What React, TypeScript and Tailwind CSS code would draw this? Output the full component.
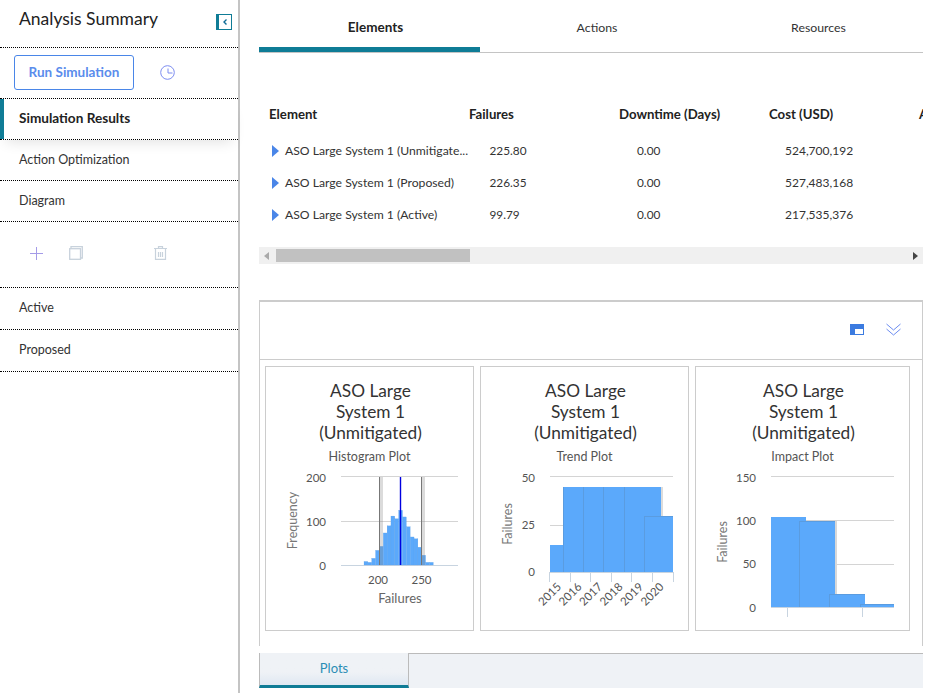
import React from "react";

const F = { fontFamily: '"Lato","Noto Sans",sans-serif' };

function Row({ children, h, extra = "" }: { children?: React.ReactNode; h: string; extra?: string }) {
  return <div className={`${h} ${extra} border-b border-dotted border-black flex items-center`}>{children}</div>;
}

function Card({ sub, wide, children }: { sub: string; wide?: boolean; children: React.ReactNode }) {
  return (
    <div className={`${wide ? "w-[215px]" : "w-[209px]"} h-[265px] border border-[#ccc] bg-white flex flex-col items-center pt-[13px] shrink-0`}>
      <div className="text-[17.3px] leading-[21px] text-[#333] text-center w-[130px] ml-[2px]">ASO Large System 1 (Unmitigated)</div>
      <div className="text-[12.5px] leading-[16px] mt-[6px] text-[#555]">{sub}</div>
      <div className="w-full h-[165px]">{children}</div>
    </div>
  );
}

function Num({ x, y, t, anchor = "end" }: { x: number; y: number; t: string; anchor?: "end" | "middle" }) {
  return <text x={x} y={y + 4} textAnchor={anchor} fontSize="11.5" fill="#555">{t}</text>;
}

function VLabel({ x, y, t }: { x: number; y: number; t: string }) {
  return <text transform={`translate(${x + 4} ${y}) rotate(-90)`} textAnchor="middle" fontSize="12.5" fill="#777">{t}</text>;
}

const hist = [8, 6, 15, 33, 42, 72, 88, 110, 104, 123, 108, 86, 63, 59, 40, 22, 6, 6];

function Histogram() {
  return (
    <svg width="207" height="165" viewBox="266 465 207 165" className="block">
      <g stroke="#d4d4d4">
        <line x1="341" x2="458" y1="476.5" y2="476.5" />
        <line x1="341" x2="458" y1="521.5" y2="521.5" />
      </g>
      <line x1="341" x2="458" y1="565.5" y2="565.5" stroke="#c8d4e0" />
      {hist.map((f, i) => {
        const x = 364 + i * 3.85;
        const hh = (f / 200) * 89;
        return <rect key={i} x={x} y={565 - hh} width="3.85" height={hh} fill="#5ba9fb" stroke="#5a9ce0" strokeWidth="0.2" />;
      })}
      <rect x="380" y="477" width="3" height="88" fill="#888" opacity="0.3" />
      <rect x="422" y="477" width="3" height="88" fill="#888" opacity="0.3" />
      <line x1="379.5" x2="379.5" y1="477" y2="565" stroke="#777" />
      <line x1="421.5" x2="421.5" y1="477" y2="565" stroke="#777" />
      <line x1="400.5" x2="400.5" y1="477" y2="565" stroke="#0000e0" strokeWidth="1.4" />
      <Num x={326} y={478} t="200" />
      <Num x={326} y={522} t="100" />
      <Num x={326} y={566} t="0" />
      <Num x={378} y={580} t="200" anchor="middle" />
      <Num x={421.5} y={580} t="250" anchor="middle" />
      <text x="400" y="603" textAnchor="middle" fontSize="13" fill="#666">Failures</text>
      <VLabel x={293} y={520.5} t="Frequency" />
    </svg>
  );
}

function Trend() {
  const ticks = [549.5, 570.5, 590.5, 611.5, 631.5, 652.5, 673.5];
  const years = ["2015", "2016", "2017", "2018", "2019", "2020"];
  return (
    <svg width="207" height="165" viewBox="481 465 207 165" className="block">
      <line x1="550" x2="673" y1="476.5" y2="476.5" stroke="#d4d4d4" />
      <line x1="550" x2="673" y1="525.5" y2="525.5" stroke="#d4d4d4" />
      <path d="M661 487h2v29h-2z" fill="#dcdcdc" />
      <path d="M550 545h13v-58h98v29h12v56H550z" fill="#5ba9fb" />
      <path d="M563.5 487V572M583.5 487V572M603.5 487V572M624.5 487V572M644.5 516V572M644 516.5H673" stroke="#5a9ce0" fill="none" />
      <line x1="549" x2="674" y1="572.5" y2="572.5" stroke="#c8d4e0" />
      {ticks.map((t) => (
        <line key={t} x1={t} x2={t} y1="572" y2="582" stroke="#c8d4e0" />
      ))}
      {years.map((y, i) => (
        <text key={y} transform={`translate(${552.5 + i * 20.5} 597) rotate(-45)`} textAnchor="middle" fontSize="11.5" fill="#555">{y}</text>
      ))}
      <Num x={535} y={478} t="50" />
      <Num x={535} y={525} t="25" />
      <Num x={535} y={572} t="0" />
      <VLabel x={508} y={524} t="Failures" />
    </svg>
  );
}

function Impact() {
  return (
    <svg width="213" height="165" viewBox="696 465 213 165" className="block">
      <line x1="771" x2="894" y1="476.5" y2="476.5" stroke="#d4d4d4" />
      <line x1="771" x2="894" y1="520.5" y2="520.5" stroke="#d4d4d4" />
      <line x1="771" x2="894" y1="564.5" y2="564.5" stroke="#d4d4d4" />
      <path d="M835 521h2v73h-2z" fill="#d8d8d8" />
      <path d="M771 517h35v4h29v73h30v10h29v3H771z" fill="#5ba9fb" />
      <path d="M799.5 521V607M799 521.5H835M829.5 594V607M829 594.5H865M860.5 604V607M860 604.5H894" stroke="#5a9ce0" fill="none" />
      <line x1="771" x2="894" y1="607.5" y2="607.5" stroke="#c8d4e0" />
      <line x1="787.5" x2="787.5" y1="607" y2="617" stroke="#c8d4e0" />
      <line x1="862.5" x2="862.5" y1="607" y2="617" stroke="#c8d4e0" />
      <Num x={756} y={478} t="150" />
      <Num x={756} y={521} t="100" />
      <Num x={756} y={564} t="50" />
      <Num x={756} y={608} t="0" />
      <VLabel x={723} y={542} t="Failures" />
    </svg>
  );
}

export default function App() {
  return (
    <div className="w-[943px] h-[693px] bg-white flex overflow-hidden text-[#333]" style={F}>
      <aside className="w-[240px] h-full border-r-2 border-[#c4c4c4] shrink-0">
        <Row h="h-[48px]" extra="relative pl-[19px] pb-[9px]">
          <span className="text-[17.5px] text-[#222]">Analysis Summary</span>
          <span className="absolute left-[216px] top-[14px] w-[16px] h-[16px] border border-[#0f7c96] border-l-[3px] flex items-center justify-center">
            <svg width="6" height="8" viewBox="0 0 6 8" fill="none" stroke="#0f6c96" strokeWidth="1.4"><path d="M4.5 1.5L2 4L4.5 6.5" /></svg>
          </span>
        </Row>
        <Row h="h-[51px]" extra="pl-[14px] pb-[2px]">
          <button className="w-[120px] h-[35px] border border-[#4a86e8] rounded-[3px] text-[#5a8cec] text-[13.5px] font-bold">Run Simulation</button>
          <svg className="ml-[26px]" width="15" height="15" viewBox="0 0 15 15" fill="none" stroke="#7c8cf0"><circle cx="7.5" cy="7.5" r="6.8" /><path d="M8 3.5V8H12.5" /></svg>
        </Row>
        <Row h="h-[41px]" extra="relative pl-[19px] pb-[1px] font-bold text-[13.6px] text-[#222] shadow-[0_8px_14px_-6px_rgba(0,0,0,0.12)]">
          <span className="absolute left-0 top-0 h-full w-[4px] bg-[#0f7c96]" />
          Simulation Results
        </Row>
        <Row h="h-[41px]" extra="pl-[19px] text-[12.5px]">Action Optimization</Row>
        <Row h="h-[41px]" extra="pl-[19px] text-[12.5px]">Diagram</Row>
        <Row h="h-[66px]" extra="pb-[3px]">
          <svg className="ml-[29px]" width="15" height="15" viewBox="0 0 15 15" stroke="#a49be8" fill="none"><path d="M7.5 1V14M1 7.5H14" /></svg>
          <svg className="ml-[25px]" width="14" height="14" viewBox="0 0 14 14" stroke="#c8d2dc" strokeWidth="1.3" fill="none"><rect x="0.7" y="2.7" width="10.8" height="10.6" /><path d="M2 2.7V0.7H13.3V12H11.5" /></svg>
          <svg className="ml-[71px]" width="13" height="14" viewBox="0 0 13 14" stroke="#c8d2dc" strokeWidth="1.2" fill="none"><path d="M0 2.5H13M4.5 2.5V0.6H8.5V2.5M1.5 2.5V13.4H11.5V2.5M4.5 6V11M6.5 6V11M8.5 6V11" /></svg>
        </Row>
        <Row h="h-[42px]" extra="pl-[19px] text-[12.5px]">Active</Row>
        <Row h="h-[42px]" extra="pl-[19px] text-[12.5px]">Proposed</Row>
      </aside>
      <main className="flex-1 min-w-0 pl-[19px] pr-[20px] flex flex-col">
        <div className="h-[53px] w-[664px] flex border-b border-[#c4c4c4] text-[12.3px] text-center">
          <div className="w-[221px] h-[52px] flex items-center justify-center font-bold text-[13.5px] border-b-[5px] border-[#0f7c96] text-[#222] pl-[12px] pt-[7px]">Elements</div>
          <div className="w-[221px] flex items-center justify-center pl-[13px] pt-[4px]">Actions</div>
          <div className="w-[222px] flex items-center justify-center pl-[13px] pt-[4px]">Resources</div>
        </div>
        <div className="relative w-[664px] h-[211px] overflow-hidden text-[12.2px]">
          <div className="grid grid-cols-[200px_150px_150px_150px_14px] pl-[10px] mt-[52px] font-bold text-[13.2px] text-[#222] h-[18px] leading-[18px] whitespace-nowrap">
            <div>Element</div><div>Failures</div><div>Downtime (Days)</div><div>Cost (USD)</div><div>A</div>
          </div>
          {[
            ["ASO Large System 1 (Unmitigate...", "225.80", "524,700,192"],
            ["ASO Large System 1 (Proposed)", "226.35", "527,483,168"],
            ["ASO Large System 1 (Active)", "99.79", "217,535,376"],
          ].map(([a, b, c], i) => (
            <div key={a} className={`flex items-center h-[32px] ${i === 0 ? "mt-[12px]" : ""} whitespace-nowrap`}>
              <svg className="ml-[13px]" width="7" height="12" viewBox="0 0 7 12"><path d="M0 0L7 6L0 12z" fill="#4a86e8" /></svg>
              <span className="ml-[6px] w-[204.5px]">{a}</span>
              <span className="w-[147.5px] text-[11.8px]">{b}</span>
              <span className="w-[148px] text-[11.8px]">0.00</span>
              <span className="text-[12px]">{c}</span>
            </div>
          ))}
          <div className="absolute left-0 right-0 bottom-0 h-[17px] bg-[#f0f0f0] flex items-center justify-between px-[5px]">
            <svg width="5" height="8" viewBox="0 0 5 8"><path d="M5 0V8L0 4z" fill="#aaa" /></svg>
            <svg width="5" height="8" viewBox="0 0 5 8"><path d="M0 0V8L5 4z" fill="#444" /></svg>
            <div className="absolute left-[17px] top-[2px] w-[194px] h-[13px] bg-[#c1c1c1]" />
          </div>
        </div>
        <div className="mt-[36px] w-[664px] h-[346px] border-l border-r border-[#ccc]">
          <div className="h-[60px] border-t-2 border-b border-[#ccc] flex items-center justify-end pr-[21px] pb-[3px] gap-[22px]">
            <svg width="14" height="11" viewBox="0 0 14 11"><rect width="14" height="11" fill="#3b7be0" /><rect x="5" y="5" width="8" height="5" fill="#fff" /></svg>
            <svg width="15" height="13" viewBox="0 0 15 13" fill="none" stroke="#6c8cf0"><path d="M0.5 1L7.5 7L14.5 1M0.5 6L7.5 12L14.5 6" /></svg>
          </div>
          <div className="flex gap-[6px] pl-[5px] pt-[6px]">
            <Card sub="Histogram Plot"><Histogram /></Card>
            <Card sub="Trend Plot"><Trend /></Card>
            <Card sub="Impact Plot" wide><Impact /></Card>
          </div>
        </div>
        <div className="h-[35px] bg-[#eff2f6] border-t border-[#bbb] flex w-[664px] mt-[7px]">
          <div className="w-[150px] -mt-px h-[35px] border-l border-r border-[#bbb] border-b-[3px] border-b-[#0f7c96] text-[#2b8db5] text-[13px] flex items-center justify-center bg-gradient-to-b from-[#eff2f6] from-60% to-[#dfe8f2]">Plots</div>
        </div>
      </main>
    </div>
  );
}
